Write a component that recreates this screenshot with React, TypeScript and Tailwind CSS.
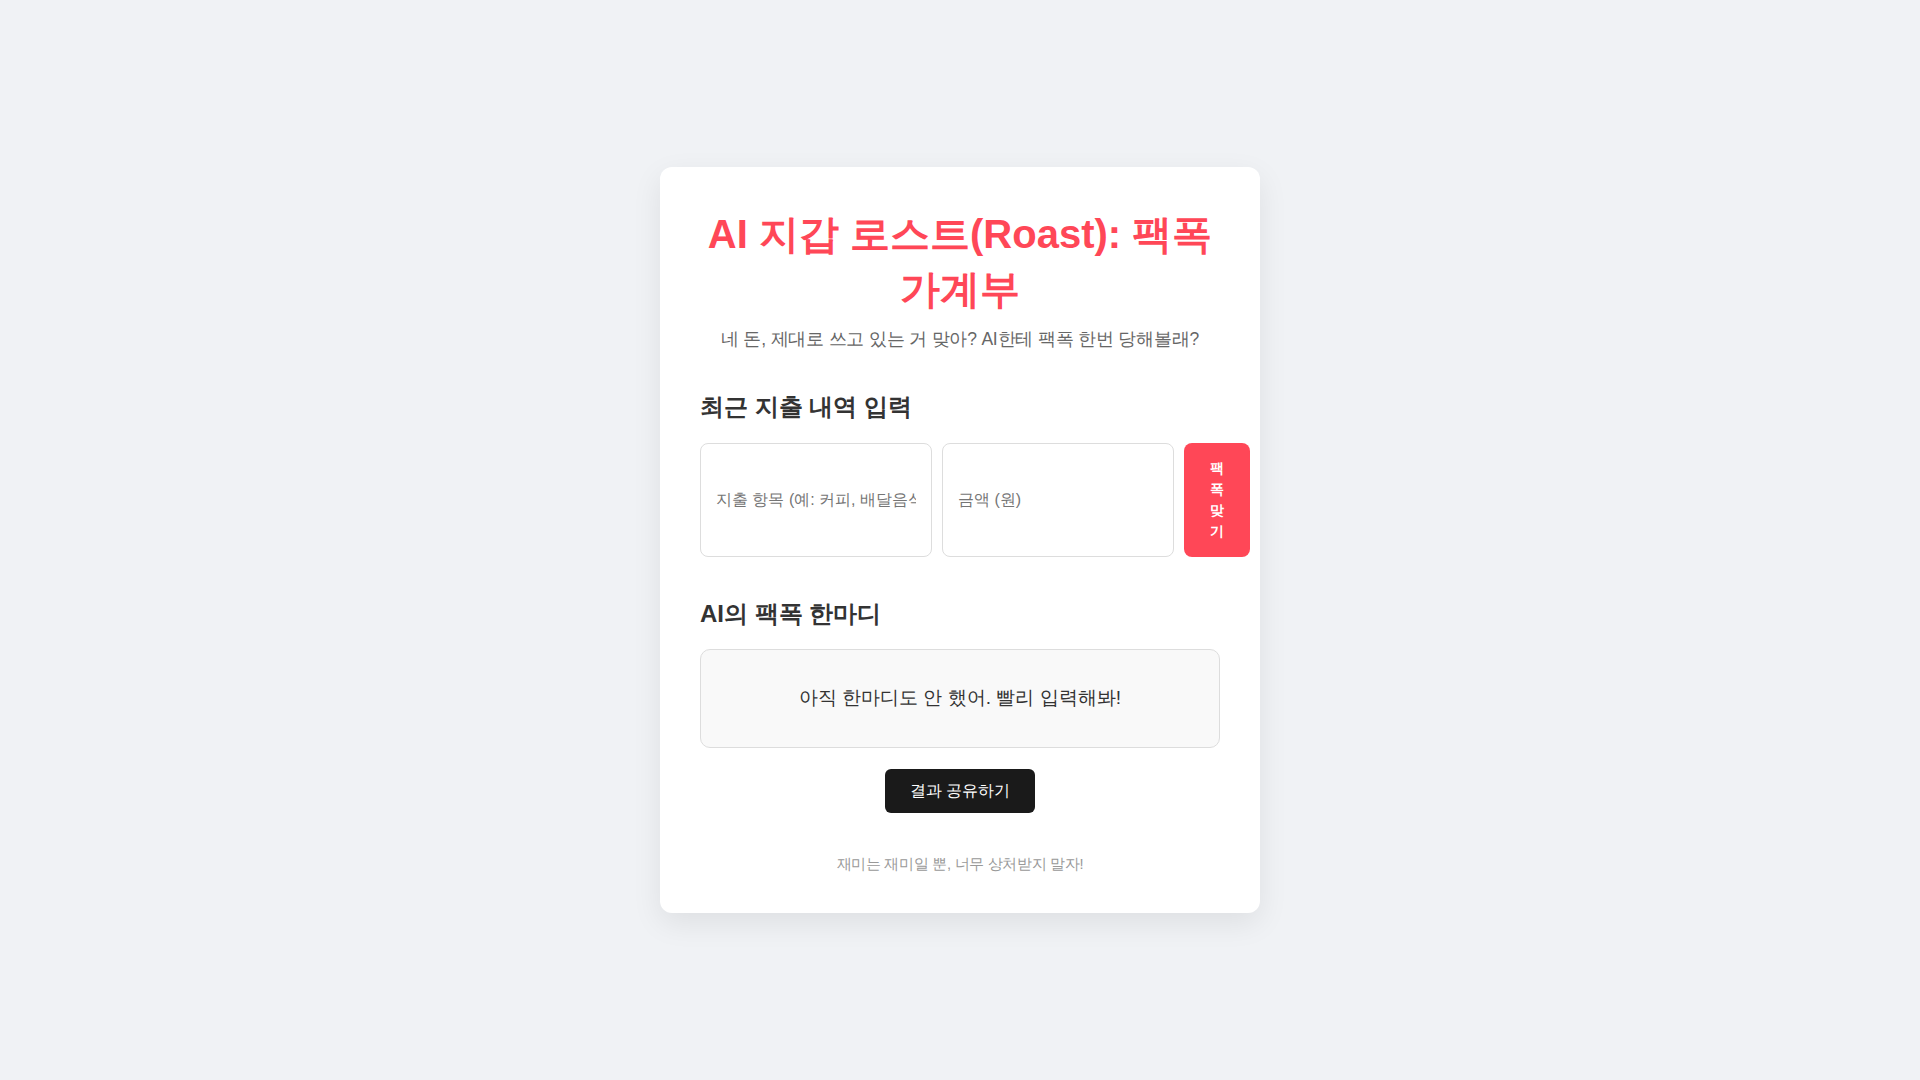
import { useState } from "react";

const FONT = "font-['Arial',sans-serif]";

export default function App() {
  const [item, setItem] = useState("");
  const [amount, setAmount] = useState("");

  return (
    <div className={`flex min-h-screen items-center justify-center bg-[#f0f2f5] ${FONT}`}>
      <div className="w-[600px] rounded-[12px] bg-white px-[40px] pt-[40px] pb-[37px] shadow-[0_10px_30px_rgba(0,0,0,0.08)]">
        <h1 className="text-center text-[40px] leading-[55px] font-bold text-[#ff4757]">
          AI 지갑 로스트(Roast): 팩폭 가계부
        </h1>
        <p className="mt-[8px] text-center text-[17.5px] leading-[28px] tracking-[-0.2px] text-[#666]">
          네 돈, 제대로 쓰고 있는 거 맞아? AI한테 팩폭 한번 당해볼래?
        </p>

        <h2 className="mt-[35px] text-[24px] leading-[38px] font-bold text-[#333]">
          최근 지출 내역 입력
        </h2>
        <div className="mt-[17px] flex gap-[10px]">
          <input
            type="text"
            value={item}
            onChange={(e) => setItem(e.target.value)}
            placeholder="지출 항목 (예: 커피, 배달음식)"
            className="h-[114px] w-[232px] shrink-0 rounded-[8px] border border-[#ddd] px-[15px] text-[16px] text-[#333] placeholder:text-[#757575] focus:outline-none"
          />
          <input
            type="number"
            value={amount}
            onChange={(e) => setAmount(e.target.value)}
            placeholder="금액 (원)"
            className="h-[114px] w-[232px] shrink-0 rounded-[8px] border border-[#ddd] px-[15px] text-[16px] text-[#333] placeholder:text-[#757575] focus:outline-none"
          />
          <button
            type="button"
            className="h-[114px] w-[66px] shrink-0 rounded-[8px] bg-[#ff4757] px-[25px] text-[14px] leading-[21px] font-bold break-all text-white"
          >
            팩폭맞기
          </button>
        </div>

        <h2 className="mt-[38px] text-[24px] leading-[38px] font-bold text-[#333]">
          AI의 팩폭 한마디
        </h2>
        <div className="mt-[16px] flex h-[99px] items-center justify-center rounded-[10px] border border-[#ddd] bg-[#f9f9f9] text-[19.2px] text-[#333]">
          아직 한마디도 안 했어. 빨리 입력해봐!
        </div>

        <div className="mt-[21px] flex justify-center">
          <button
            type="button"
            className="h-[44px] w-[150px] rounded-[6px] bg-[#1a1a1a] text-[16px] text-white"
          >
            결과 공유하기
          </button>
        </div>

        <p className="mt-[40px] text-center text-[14.6px] leading-[23px] tracking-[-0.3px] text-[#999]">
          재미는 재미일 뿐, 너무 상처받지 말자!
        </p>
      </div>
    </div>
  );
}
